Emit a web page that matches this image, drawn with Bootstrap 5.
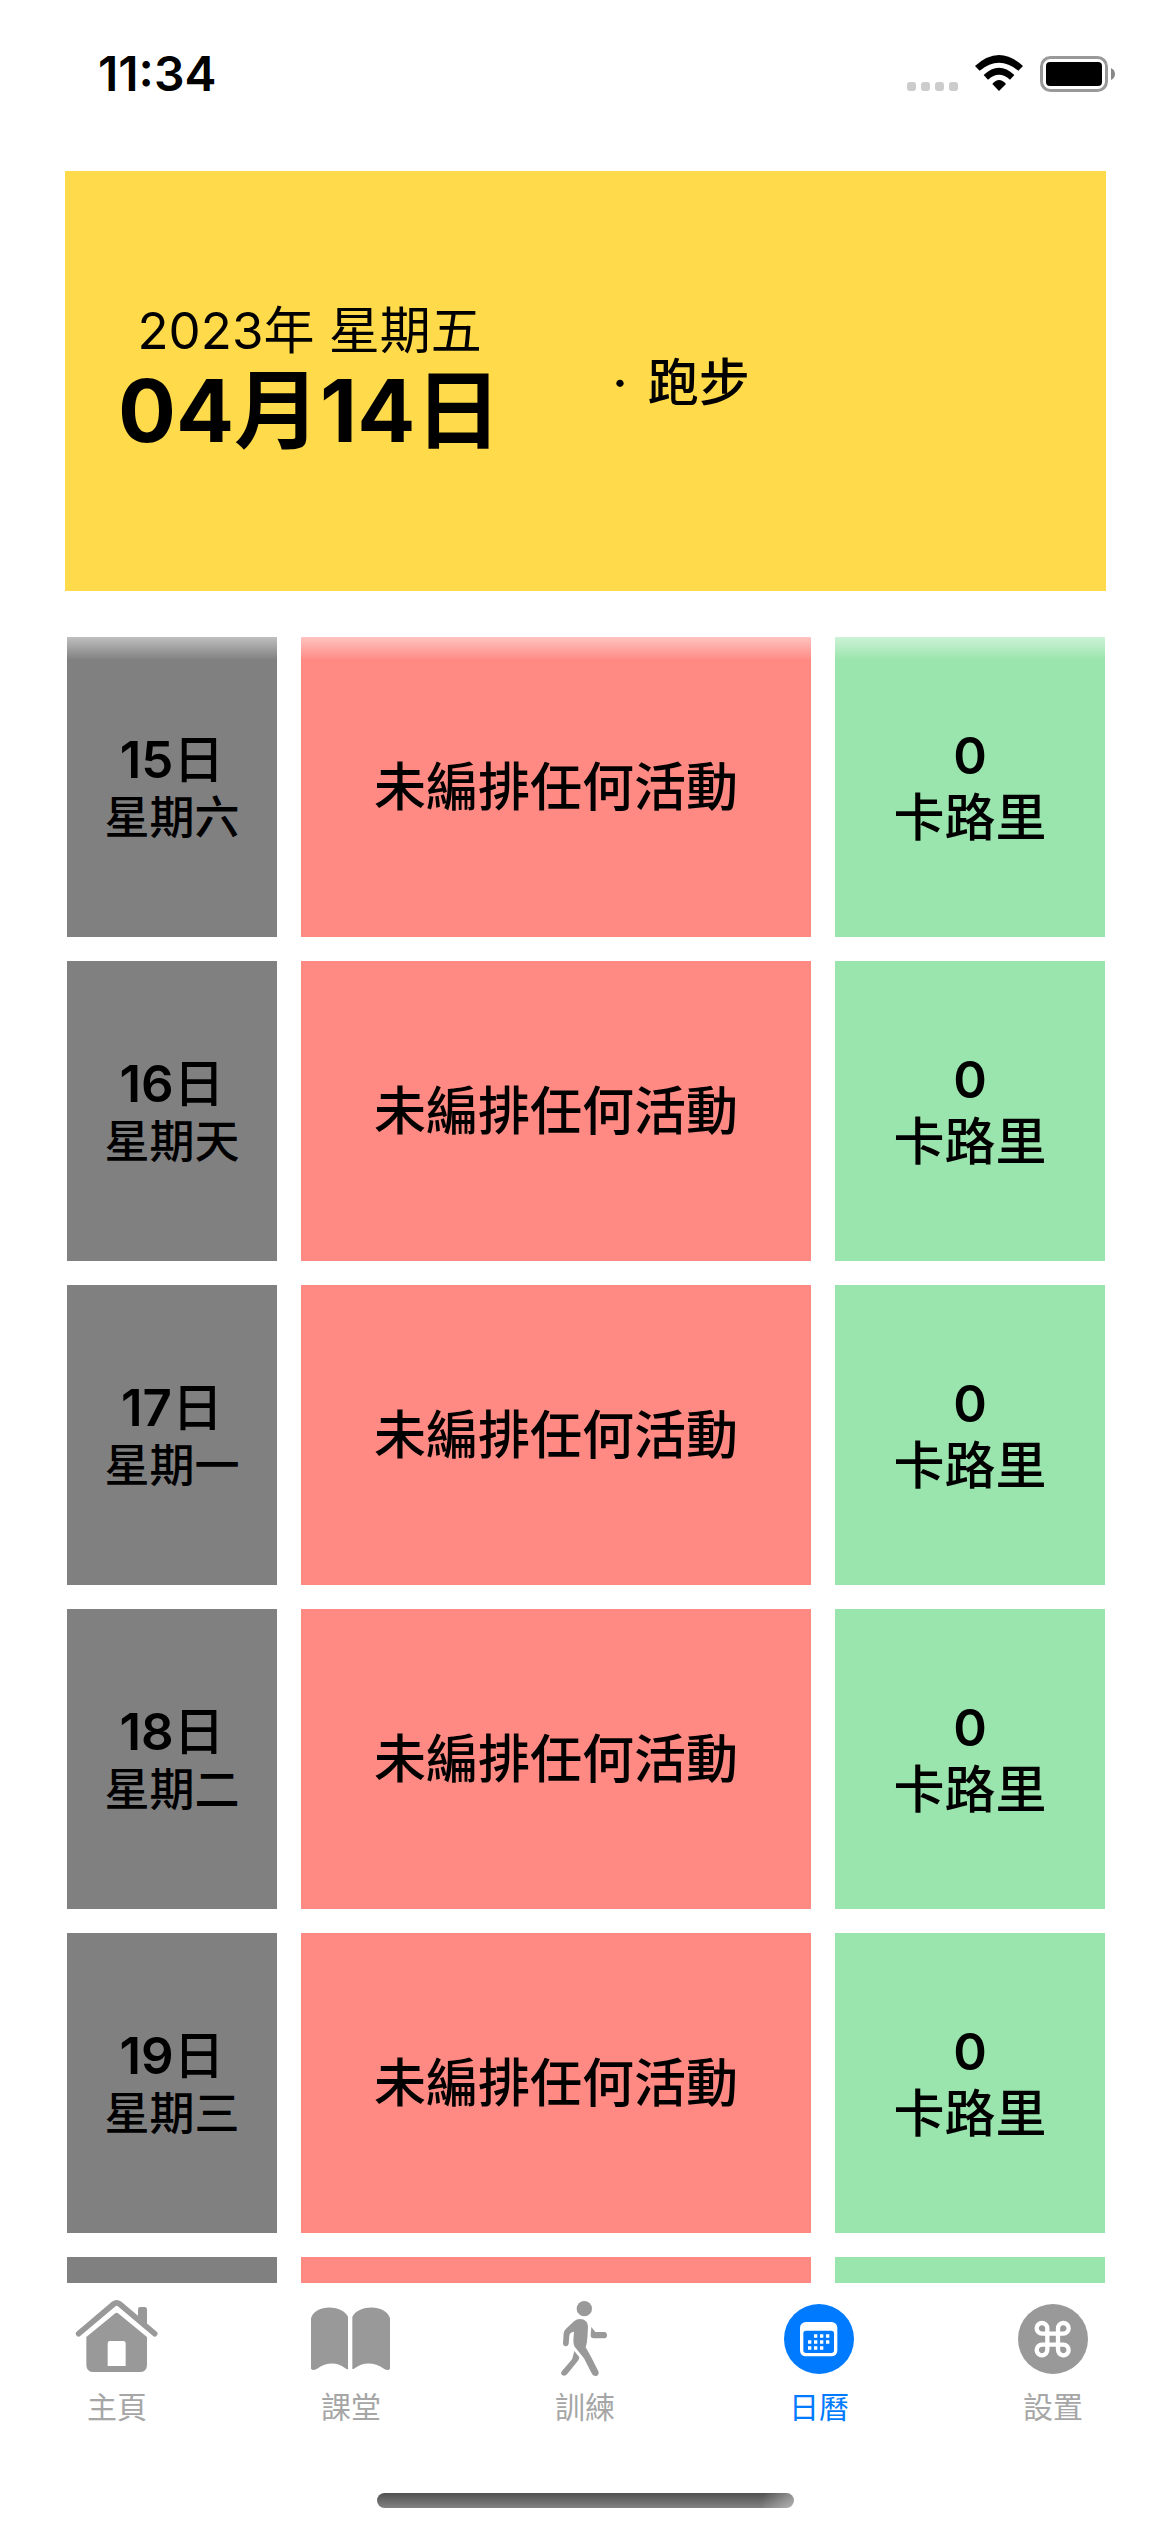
<!DOCTYPE html>
<html lang="zh-Hant">
<head>
<meta charset="utf-8">
<meta name="viewport" content="width=device-width, initial-scale=1">
<title>日曆</title>
<link href="https://cdn.jsdelivr.net/npm/bootstrap@5.3.0/dist/css/bootstrap.min.css" rel="stylesheet">
<style>
  body { font-family: Inter, "Noto Sans CJK TC", sans-serif; color: #000; background: #fff; }
  svg { display: block; overflow: visible; }

  .status-bar { height: 148px; padding: 0 55px 0 98px; }
  .status-time { font-size: 48px; line-height: 56px; font-weight: 600; }
  .status-icons { gap: 17px; }

  .today { margin: 23px 64px 46px 65px; height: 420px; background: #ffda4b; }
  .today-date { width: 47%; }
  .today-year { font-size: 51px; line-height: 60px; font-weight: 400; }
  .today-day { font-size: 86px; line-height: 100px; font-weight: 700; }
  .today-plan { padding: 4px 0 0 58px; gap: 20px; font-size: 51px; line-height: 60px; font-weight: 500; }

  .schedule { padding: 0 65px 0 67px; gap: 24px; min-height: 0; }
  .schedule-fade::before { content: ""; position: absolute; inset: 0 0 auto 0; height: 23px;
    background: linear-gradient(rgba(255,255,255,.5), rgba(255,255,255,0)); }
  .day-row { gap: 24px; min-height: 300px; font-size: 51px; line-height: 62px; font-weight: 500; }
  .day-date { width: 210px; background: #808080; }
  .day-week { font-size: 45px; line-height: 54px; }
  .day-plan { background: #ff8a84; font-size: 52px; padding-top: 2px; }
  .day-energy { width: 270px; background: #9ae5ad; }

  .tab-bar { padding-top: 17px; }
  .tab-item { color: #999; gap: 11px; }
  .tab-item.active { color: #007aff; }
  .tab-label { font-size: 30px; line-height: 36px; color: #a6a6a6; }
  .active .tab-label { color: inherit; }
  .home-indicator { width: 417px; height: 15px; margin: 68px auto 24px; border-radius: 8px;
    background: linear-gradient(100deg, transparent 92%, rgba(255,255,255,.4)), linear-gradient(#505050, #828282); }
</style>
</head>
<body>
<div class="d-flex flex-column vh-100 overflow-hidden">

  <header class="status-bar d-flex align-items-center justify-content-between flex-shrink-0">
    <span class="status-time">11:34</span>
    <div class="status-icons d-flex align-items-center">
      <svg width="51" height="36" viewBox="0 0 51 36" fill="#ccc" aria-hidden="true">
        <rect x="0" y="26" width="9" height="9" rx="3"/><rect x="14" y="26" width="9" height="9" rx="3"/>
        <rect x="28" y="26" width="9" height="9" rx="3"/><rect x="42" y="26" width="9" height="9" rx="3"/>
      </svg>
      <svg width="48" height="36" viewBox="345 108 144 108" aria-hidden="true">
        <path d="M345 138Q417 72 489 138L475 152Q417 104 359 152Z"/>
        <path d="M371 165Q417 121 463 165L450 179Q417 150 384 179Z"/>
        <path d="M397 192Q417 168 438 192L417 213Z"/>
      </svg>
      <svg width="75" height="36" viewBox="0 0 75 36" aria-hidden="true">
        <rect x="1.5" y="1.5" width="65" height="33" rx="9" fill="none" stroke="#999" stroke-width="3"/>
        <rect x="6" y="6" width="56" height="24" rx="4"/>
        <path d="M71 12Q75 14 75 18T71 24Z" fill="#888"/>
      </svg>
    </div>
  </header>

  <section class="today d-flex align-items-center flex-shrink-0">
    <div class="today-date text-center">
      <div class="today-year">2023年 星期五</div>
      <div class="today-day">04月14日</div>
    </div>
    <div class="today-plan d-flex"><span>·</span><span>跑步</span></div>
  </section>

  <main class="schedule d-flex flex-column flex-grow-1 position-relative overflow-hidden schedule-fade">
    <div class="day-row d-flex text-center">
      <div class="day-date d-flex flex-column justify-content-center"><div><span class="fw-semibold">15</span>日</div><div class="day-week">星期六</div></div>
      <div class="day-plan d-flex flex-grow-1 align-items-center justify-content-center">未編排任何活動</div>
      <div class="day-energy d-flex flex-column justify-content-center"><div class="fw-semibold">0</div><div>卡路里</div></div>
    </div>
    <div class="day-row d-flex text-center">
      <div class="day-date d-flex flex-column justify-content-center"><div><span class="fw-semibold">16</span>日</div><div class="day-week">星期天</div></div>
      <div class="day-plan d-flex flex-grow-1 align-items-center justify-content-center">未編排任何活動</div>
      <div class="day-energy d-flex flex-column justify-content-center"><div class="fw-semibold">0</div><div>卡路里</div></div>
    </div>
    <div class="day-row d-flex text-center">
      <div class="day-date d-flex flex-column justify-content-center"><div><span class="fw-semibold">17</span>日</div><div class="day-week">星期一</div></div>
      <div class="day-plan d-flex flex-grow-1 align-items-center justify-content-center">未編排任何活動</div>
      <div class="day-energy d-flex flex-column justify-content-center"><div class="fw-semibold">0</div><div>卡路里</div></div>
    </div>
    <div class="day-row d-flex text-center">
      <div class="day-date d-flex flex-column justify-content-center"><div><span class="fw-semibold">18</span>日</div><div class="day-week">星期二</div></div>
      <div class="day-plan d-flex flex-grow-1 align-items-center justify-content-center">未編排任何活動</div>
      <div class="day-energy d-flex flex-column justify-content-center"><div class="fw-semibold">0</div><div>卡路里</div></div>
    </div>
    <div class="day-row d-flex text-center">
      <div class="day-date d-flex flex-column justify-content-center"><div><span class="fw-semibold">19</span>日</div><div class="day-week">星期三</div></div>
      <div class="day-plan d-flex flex-grow-1 align-items-center justify-content-center">未編排任何活動</div>
      <div class="day-energy d-flex flex-column justify-content-center"><div class="fw-semibold">0</div><div>卡路里</div></div>
    </div>
    <div class="day-row d-flex">
      <div class="day-date"></div><div class="day-plan flex-grow-1"></div><div class="day-energy"></div>
    </div>
  </main>

  <footer class="flex-shrink-0">
    <nav class="tab-bar d-flex">
      <a href="#" class="tab-item d-flex flex-column align-items-center flex-fill w-100 text-decoration-none">
        <svg width="82" height="78" viewBox="78 270 246 234" fill="currentColor" aria-hidden="true">
          <path d="M86 371L191 282Q200 275 209 282L314 371" fill="none" stroke="currentColor" stroke-width="17" stroke-linecap="round"/>
          <path d="M264 325V298Q264 291 271 291H284Q291 291 291 298V348Z"/>
          <path fill-rule="evenodd" d="M109 381L194 311Q200 306 206 311L291 381V464Q291 486 269 486H131Q109 486 109 464ZM173 468H227V400Q227 393 220 393H180Q173 393 173 400Z"/>
        </svg>
        <span class="tab-label">主頁</span>
      </a>
      <a href="#" class="tab-item d-flex flex-column align-items-center flex-fill w-100 text-decoration-none">
        <svg width="82" height="78" viewBox="780 270 246 234" fill="currentColor" aria-hidden="true">
          <path d="M783 325C795 283 873 283 894 320V477Q891 479 885 474Q845 446 800 477Q788 484 783 476Z"/>
          <path d="M907 320C928 283 1008 283 1020 325V476Q1015 484 1003 477Q957 446 915 474Q910 479 907 476Z"/>
        </svg>
        <span class="tab-label">課堂</span>
      </a>
      <a href="#" class="tab-item d-flex flex-column align-items-center flex-fill w-100 text-decoration-none">
        <svg width="82" height="78" viewBox="132 270 246 234" fill="currentColor" aria-hidden="true">
          <circle cx="253" cy="296" r="23"/>
          <path d="M240 327C255 327 264 336 264 352L262 385Q261 400 257 412L273 440L295 484Q299 494 289 498Q280 499 276 492L252 445L224 410Q220 403 220 392L222 365Q209 366 208 378L206 402Q204 409 197 409Q189 408 189 401L191 370Q192 362 198 356L222 334Q230 327 240 327Z"/>
          <path d="M274 351L286 366H313Q321 367 321 376Q321 385 313 385H281Q271 384 272 374Z"/>
          <path d="M223 423L238 442Q237 450 231 456L201 493Q195 500 187 496Q180 490 186 483L215 449Q218 444 219 438Z"/>
        </svg>
        <span class="tab-label">訓練</span>
      </a>
      <a href="#" class="tab-item active d-flex flex-column align-items-center flex-fill w-100 text-decoration-none" aria-current="page">
        <svg width="82" height="78" viewBox="834 270 246 234" fill="currentColor" aria-hidden="true">
          <circle cx="957" cy="387" r="105"/>
          <rect x="900" y="336" width="112" height="103" rx="17" fill="#fff"/>
          <rect x="910" y="362" width="92" height="67" rx="8"/>
          <path fill="#fff" d="M942 373h10v10h-10zM960 373h10v10h-10zM978 373h10v10h-10zM924 391h10v10h-10zM942 391h10v10h-10zM960 391h10v10h-10zM978 391h10v10h-10zM924 409h10v10h-10zM942 409h10v10h-10zM960 409h10v10h-10z"/>
        </svg>
        <span class="tab-label">日曆</span>
      </a>
      <a href="#" class="tab-item d-flex flex-column align-items-center flex-fill w-100 text-decoration-none">
        <svg width="82" height="78" viewBox="156 270 246 234" fill="currentColor" aria-hidden="true">
          <circle cx="279" cy="387" r="105"/>
          <path fill="none" stroke="#fff" stroke-width="13" stroke-linejoin="round" d="M262 371V356a16 16 0 1 0-16 15H310a16 16 0 1 0-16-15V419a16 16 0 1 0 16-15H246a16 16 0 1 0 16 15Z"/>
        </svg>
        <span class="tab-label">設置</span>
      </a>
    </nav>
    <div class="home-indicator"></div>
  </footer>
</div>
<script src="https://cdn.jsdelivr.net/npm/bootstrap@5.3.0/dist/js/bootstrap.bundle.min.js"></script>
</body>
</html>
